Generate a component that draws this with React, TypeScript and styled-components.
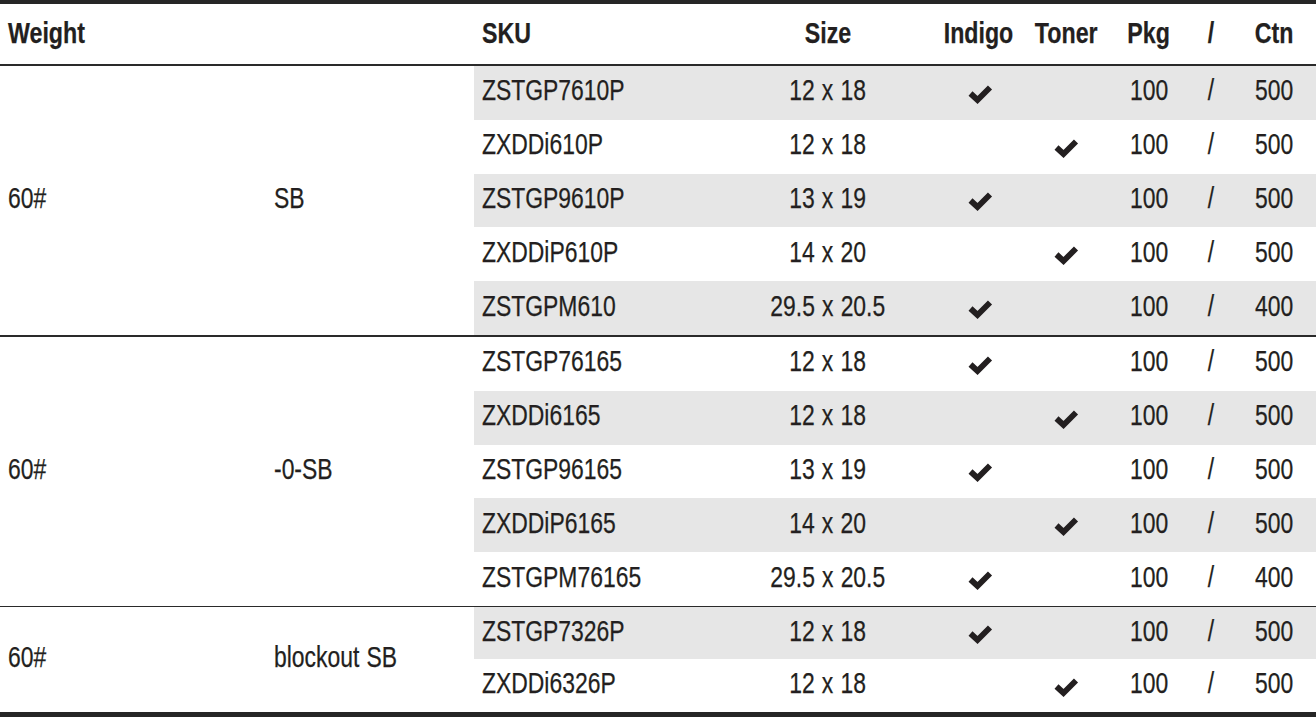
import React from "react";
import styled, { createGlobalStyle } from "styled-components";

const GlobalStyle = createGlobalStyle`
  html, body { margin: 0; padding: 0; background: #ffffff; }
  body {
    font-family: "Liberation Sans", Arial, sans-serif;
    color: #231f20;
  }
`;

const COLS = "244px 220px 80px 96px 70px 54px 78px";

const Table = styled.div`
  width: 1316px;
  border-top: 4px solid #262626;
  border-bottom: 5px solid #262626;
  box-sizing: border-box;
`;

const HeaderRow = styled.div`
  display: grid;
  grid-template-columns: 265px 209px ${COLS};
  height: 60px;
  border-bottom: 2px solid #2a2a2a;
`;

const HeadCell = styled.div<{ $align?: "left" | "center"; $pad?: number; $padRight?: number }>`
  display: flex;
  align-items: center;
  justify-content: ${(p) => (p.$align === "center" ? "center" : "flex-start")};
  padding-left: ${(p) => p.$pad ?? 0}px;
  padding-right: ${(p) => p.$padRight ?? 0}px;
  font-size: 29px;
  font-weight: 700;
  --sx: 0.8;
  --mt: -1px;
`;

const Text = styled.span<{ $origin?: "left" | "center" }>`
  display: inline-block;
  white-space: nowrap;
  word-spacing: 1px;
  -webkit-text-stroke: 0.25px currentColor;
  transform: scaleX(var(--sx, 0.79));
  transform-origin: ${(p) => (p.$origin === "center" ? "center" : "left")} center;
  line-height: 1;
  margin-top: var(--mt, -4px);
`;

const Group = styled.div<{ $border: number }>`
  display: flex;
  border-top: ${(p) => p.$border}px solid #2a2a2a;
`;

const SideCell = styled.div<{ $width: number; $pad: number }>`
  width: ${(p) => p.$width}px;
  flex: none;
  display: flex;
  align-items: center;
  padding-left: ${(p) => p.$pad}px;
  box-sizing: border-box;
  font-size: 29px;
`;

const Rows = styled.div`
  flex: 1;
  display: flex;
  flex-direction: column;
`;

const Row = styled.div<{ $shade: boolean; $height: number }>`
  display: grid;
  grid-template-columns: ${COLS};
  height: ${(p) => p.$height}px;
  background: ${(p) => (p.$shade ? "#e6e6e6" : "#ffffff")};
`;

const Cell = styled.div<{ $align?: "left" | "center"; $pad?: number; $padRight?: number }>`
  display: flex;
  align-items: center;
  justify-content: ${(p) => (p.$align === "left" ? "flex-start" : "center")};
  padding-left: ${(p) => p.$pad ?? 0}px;
  padding-right: ${(p) => p.$padRight ?? 0}px;
  font-size: 29px;
`;

const Check = () => (
  <svg width="26" height="20" viewBox="0 0 26 20" style={{ marginTop: 2 }}>
    <path d="M3.5 9.5 L10.5 16 L23 3.5" fill="none" stroke="#231f20" strokeWidth="5.8" strokeLinejoin="miter" />
  </svg>
);

type Item = { sku: string; size: string; indigo: boolean; ctn: string };

const groups: { weight: string; type: string; border: number; height: number; items: Item[] }[] = [
  {
    weight: "60#",
    type: "SB",
    border: 0,
    height: 53.8,
    items: [
      { sku: "ZSTGP7610P", size: "12 x 18", indigo: true, ctn: "500" },
      { sku: "ZXDDi610P", size: "12 x 18", indigo: false, ctn: "500" },
      { sku: "ZSTGP9610P", size: "13 x 19", indigo: true, ctn: "500" },
      { sku: "ZXDDiP610P", size: "14 x 20", indigo: false, ctn: "500" },
      { sku: "ZSTGPM610", size: "29.5 x 20.5", indigo: true, ctn: "400" },
    ],
  },
  {
    weight: "60#",
    type: "-0-SB",
    border: 2,
    height: 53.8,
    items: [
      { sku: "ZSTGP76165", size: "12 x 18", indigo: true, ctn: "500" },
      { sku: "ZXDDi6165", size: "12 x 18", indigo: false, ctn: "500" },
      { sku: "ZSTGP96165", size: "13 x 19", indigo: true, ctn: "500" },
      { sku: "ZXDDiP6165", size: "14 x 20", indigo: false, ctn: "500" },
      { sku: "ZSTGPM76165", size: "29.5 x 20.5", indigo: true, ctn: "400" },
    ],
  },
  {
    weight: "60#",
    type: "blockout SB",
    border: 1,
    height: 52.5,
    items: [
      { sku: "ZSTGP7326P", size: "12 x 18", indigo: true, ctn: "500" },
      { sku: "ZXDDi6326P", size: "12 x 18", indigo: false, ctn: "500" },
    ],
  },
];

export default function App() {
  let idx = 0;
  return (
    <>
      <GlobalStyle />
      <Table>
        <HeaderRow>
          <HeadCell $pad={8}><Text>Weight</Text></HeadCell>
          <HeadCell />
          <HeadCell $pad={8}><Text>SKU</Text></HeadCell>
          <HeadCell $align="center"><Text $origin="center">Size</Text></HeadCell>
          <HeadCell $align="center"><Text $origin="center">Indigo</Text></HeadCell>
          <HeadCell $align="center"><Text $origin="center">Toner</Text></HeadCell>
          <HeadCell $align="center"><Text $origin="center">Pkg</Text></HeadCell>
          <HeadCell $align="center"><Text $origin="center">/</Text></HeadCell>
          <HeadCell $align="center" $padRight={6}><Text $origin="center">Ctn</Text></HeadCell>
        </HeaderRow>
        {groups.map((g, gi) => (
          <Group key={gi} $border={g.border}>
            <SideCell $width={265} $pad={8}><Text>{g.weight}</Text></SideCell>
            <SideCell $width={209} $pad={9}><Text>{g.type}</Text></SideCell>
            <Rows>
              {g.items.map((it) => {
                const shade = idx % 2 === 0;
                idx += 1;
                return (
                  <Row key={it.sku} $shade={shade} $height={g.height}>
                    <Cell $align="left" $pad={8}><Text>{it.sku}</Text></Cell>
                    <Cell><Text $origin="center">{it.size}</Text></Cell>
                    <Cell $pad={4}>{it.indigo ? <Check /> : null}</Cell>
                    <Cell>{!it.indigo ? <Check /> : null}</Cell>
                    <Cell><Text $origin="center">100</Text></Cell>
                    <Cell><Text $origin="center">/</Text></Cell>
                    <Cell $padRight={6}><Text $origin="center">{it.ctn}</Text></Cell>
                  </Row>
                );
              })}
            </Rows>
          </Group>
        ))}
      </Table>
    </>
  );
}
